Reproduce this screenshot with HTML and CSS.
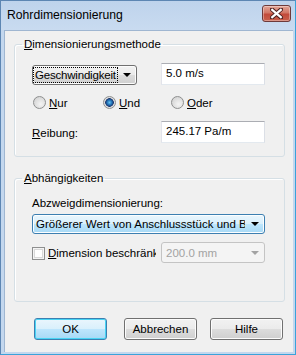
FILE: index.html
```html
<!DOCTYPE html>
<html lang="de">

<head>
  <meta charset="UTF-8">
  <meta name="viewport" content="width=device-width, initial-scale=1.0">
  <title>Rohrdimensionierung</title>
  <link rel="stylesheet" href="styles.css">
</head>

<body>
  <div class="window">
    <div class="titlebar">
      <span class="title">Rohrdimensionierung</span>
      <span class="close">
        <svg width="13" height="11" viewBox="0 0 13 11">
          <path d="M2 1.5 L11 9.5 M11 1.5 L2 9.5" stroke="#4b2020" stroke-width="4.2" stroke-linecap="square" fill="none" />
          <path d="M2.2 1.8 L10.8 9.2 M10.8 1.8 L2.2 9.2" stroke="#ffffff" stroke-width="2.2" stroke-linecap="square" fill="none" />
        </svg>
      </span>
    </div>

    <div class="client">
      <fieldset class="group group-method">
        <legend><u>D</u>imensionierungsmethode</legend>
        <div class="form-grid">
          <div class="combo combo-button">
            <span class="focus-rect">Geschwindigkeit</span>
            <span class="arrow"></span>
          </div>
          <div class="textbox">5.0 m/s</div>

          <div class="radios">
            <label class="radio-item item-nur"><span class="radio"></span><span><u>N</u>ur</span></label>
            <label class="radio-item item-und"><span class="radio checked"></span><span><u>U</u>nd</span></label>
            <label class="radio-item"><span class="radio"></span><span><u>O</u>der</span></label>
          </div>

          <span class="field-label"><u>R</u>eibung:</span>
          <div class="textbox">245.17 Pa/m</div>
        </div>
      </fieldset>

      <fieldset class="group group-deps">
        <legend><u>A</u>bhängigkeiten</legend>
        <div class="caption">Abzweigdimensionierung:</div>
        <div class="combo combo-hot">
          <span class="combo-text">Größerer Wert von Anschlussstück und Bereich</span>
          <span class="arrow"></span>
        </div>
        <div class="limit-row">
          <label class="check-item"><span class="checkbox"></span><span class="check-text"><u>D</u>imension beschränken</span></label>
          <div class="combo combo-disabled">
            <span class="combo-text">200.0 mm</span>
            <span class="arrow"></span>
          </div>
        </div>
      </fieldset>

      <div class="buttons">
        <span class="btn btn-default">OK</span>
        <span class="btn btn-cancel">Abbrechen</span>
        <span class="btn btn-help">Hilfe</span>
      </div>
    </div>
  </div>
</body>

</html>
```

FILE: styles.css
```css
body {
  margin: 0;
  font-family: "Liberation Sans", Arial, sans-serif;
  font-size: 11.5px;
  color: #000;
  background: #ffffff;
}

.window {
  width: 296px;
  height: 355px;
  box-sizing: border-box;
  display: flex;
  flex-direction: column;
  background: #c3d7ee;
  border: 1px solid #5d86b3;
  border-right-color: #3aa3da;
  border-bottom-color: #3aa3da;
}

.titlebar {
  height: 29px;
  display: flex;
  align-items: center;
  justify-content: space-between;
  padding: 0 4px 0 6px;
  background: linear-gradient(#bed3ec, #c9dbf0);
}

.title {
  font-size: 12.2px;
  margin-top: -2px;
}

.close {
  width: 29px;
  height: 17px;
  box-sizing: border-box;
  margin-top: -4px;
  display: flex;
  align-items: center;
  justify-content: center;
  border: 1px solid #6e3a3a;
  border-radius: 3px;
  background: linear-gradient(#e3a597, #d27665 45%, #c24a3a 55%, #c9604c);
  box-shadow: inset 0 0 0 1px rgba(255, 255, 255, 0.35);
}

.client {
  flex: 1;
  margin: 0 2px 2px 3px;
  background: #f0f0f0;
  border: 1px solid #9fb6d1;
  border-right: none;
  border-bottom: none;
  padding: 6px 8px 0 9px;
}

/* group boxes */

.group {
  margin: 0;
  border: 1px solid #d5dfe5;
  border-radius: 3px;
  box-shadow: inset 1px 1px 0 #fff;
  padding: 0 19px 0 17px;
  min-width: 0;
}

.group legend {
  padding: 0 2px;
  margin-left: -10px;
  line-height: 14px;
}

.group-method {
  padding-top: 12px;
  padding-bottom: 13px;
}

.group-deps {
  margin-top: 14px;
  padding-top: 11px;
  padding-bottom: 38px;
}

.form-grid {
  display: grid;
  grid-template-columns: 1fr 104px;
  align-items: end;
}

/* combo boxes */

.combo {
  height: 20px;
  box-sizing: border-box;
  display: flex;
  align-items: center;
  justify-content: space-between;
  border-radius: 3px;
  padding: 0 5px 0 2px;
  overflow: hidden;
  white-space: nowrap;
}

.combo-button {
  width: 105px;
  padding-left: 1px;
  border: 1px solid #707070;
  background: linear-gradient(#f2f2f2, #ebebeb 50%, #dddddd 50%, #cfcfcf);
  box-shadow: inset 0 0 0 1px #fcfcfc;
}

.focus-rect {
  flex: none;
  width: 83px;
  box-sizing: border-box;
  padding-left: 1px;
  line-height: 14px;
  letter-spacing: -0.2px;
  outline: 1px dotted #000;
  overflow: hidden;
}

.arrow {
  flex: none;
  width: 0;
  height: 0;
  margin-left: 6px;
  border-left: 4px solid transparent;
  border-right: 4px solid transparent;
  border-top: 4px solid #000;
}

.combo-hot {
  margin-top: 4px;
  border: 1px solid #3c7fb1;
  background: linear-gradient(#eaf6fd, #d9f0fc 50%, #bee6fd 50%, #a7d9f5);
  box-shadow: inset 0 0 0 1px #fcfeff;
}

.combo-text {
  flex: 1;
  overflow: hidden;
  padding-left: 1px;
}

.combo-disabled {
  width: 104px;
  height: 21px;
  border: 1px solid #c4c4c4;
  background: #f4f4f4;
  color: #a3a3a3;
  padding-left: 3px;
}

.combo-disabled .arrow {
  border-top-color: #a3a3a3;
}

/* text boxes */

.textbox {
  height: 22px;
  box-sizing: border-box;
  padding: 3px 4px 0;
  background: #fff;
  border: 1px solid #e3e9ef;
  border-top-color: #abadb3;
  border-left-color: #e2e3ea;
  border-right-color: #dbdfe6;
}

/* radios and checkbox */

.radios {
  grid-column: 1 / 3;
  display: flex;
  margin: 11px 0 12px 1px;
}

.radio-item {
  display: flex;
  align-items: center;
  gap: 3px;
}

.item-nur {
  width: 70px;
}

.item-und {
  width: 68px;
}

.radio {
  width: 13px;
  height: 13px;
  box-sizing: border-box;
  border-radius: 50%;
  border: 1px solid #8e8f8f;
  background: radial-gradient(circle at 60% 65%, #f4f4f4, #d8d8d8 70%, #c7c7c7);
}

.radio.checked {
  background: radial-gradient(circle at 50% 50%, #66c2f2 0, #1f6fb4 2.5px, #20386d 4px, #e8e8e8 4.6px, #d2d2d2 6px);
}

.field-label {
  align-self: center;
  padding-top: 1px;
}

.caption {
  line-height: 14px;
}

.limit-row {
  display: flex;
  align-items: center;
  justify-content: space-between;
  margin-top: 8px;
}

.check-item {
  display: flex;
  align-items: center;
  gap: 3px;
  width: 124px;
  overflow: hidden;
  white-space: nowrap;
  margin-top: 1px;
}

.checkbox {
  flex: none;
  width: 13px;
  height: 13px;
  box-sizing: border-box;
  border: 1px solid #8e8f8f;
  background: #fff;
  box-shadow: inset 0 0 0 1px #f4f4f4, inset 0 0 0 2px #d9d9d9;
}

/* dialog buttons */

.buttons {
  display: flex;
  margin-top: 16px;
  padding-left: 20px;
}

.btn {
  width: 73px;
  height: 22px;
  box-sizing: border-box;
  display: flex;
  align-items: center;
  justify-content: center;
  border: 1px solid #707070;
  border-radius: 3px;
  background: linear-gradient(#f2f2f2, #ebebeb 50%, #dddddd 50%, #cfcfcf);
  box-shadow: inset 0 0 0 1px #fcfcfc;
}

.btn-default {
  border-color: #3c7fb1;
  background: linear-gradient(#eaf6fd, #d9f0fc 50%, #bee6fd 50%, #a7d9f5);
  box-shadow: inset 0 0 0 1px #48d4f4;
}

.btn-cancel {
  margin-left: 17px;
}

.btn-help {
  margin-left: 13px;
}
```
